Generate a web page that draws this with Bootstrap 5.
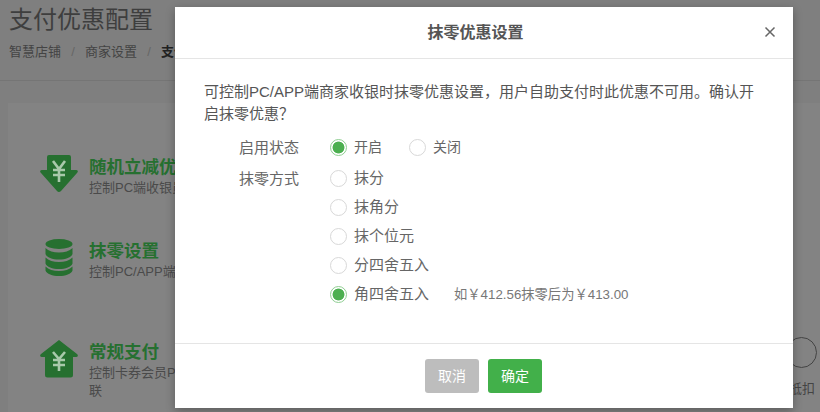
<!DOCTYPE html>
<html lang="zh">
<head>
<meta charset="utf-8">
<title>支付优惠配置</title>
<link href="https://cdn.jsdelivr.net/npm/bootstrap@5.3.0/dist/css/bootstrap.min.css" rel="stylesheet">
<style>
html,body{height:412px;overflow:hidden}
body{background:#7f7f7f;font-family:"Liberation Sans","Noto Sans CJK SC",sans-serif;color:#444;position:relative;width:820px}
.page-top{height:81px;padding:4px 9px 0;border-bottom:1px solid #757575}
.page-title{font-size:24px;line-height:32px;font-weight:400;color:#3e3e3e;margin:0}
.crumbs{font-size:13px;line-height:18px;margin:7px 0 0;color:#444}
.crumbs b{color:#222;white-space:nowrap}
.crumbs i{font-style:normal;color:#666;width:24px;text-align:center}
.page-body{height:331px;padding:22px 0 0 8px}
.panel-box{background:#838383;height:309px;padding:51px 0 0 31px;position:relative}
.feature{height:84px;gap:10px}
.feature-tall{height:101px}
.feature-ico{width:40px;height:38px;flex:none;margin-top:1px}
.feature-txt{margin-top:2px}
.feature-name{font-size:17.500px;line-height:22px;font-weight:700;color:#267030;white-space:nowrap}
.feature-desc{font-size:13px;line-height:18px;color:#4a4a4a;width:100px;margin-top:1px}
.feature-ico .solid{fill:#267030}
.feature-ico .yen{stroke:#a9c9ab;stroke-width:2.600;fill:none}
.toggle-ring{position:absolute;left:778px;top:234px;width:31px;height:31px;border:1px solid #444;border-radius:50%}
.deduct{position:absolute;left:781px;top:277px;font-size:13px;line-height:18px;color:#444;white-space:nowrap}
.dlg{position:absolute;left:175px;top:7px;width:618px;height:401px;background:#fff;border:0;border-radius:0;box-shadow:0 3px 9px rgba(0,0,0,.3)}
.dlg .modal-header{height:52px;padding:0 17px 0 0;border-bottom:1px solid #e5e5e5;position:relative;justify-content:center}
.dlg .modal-title{font-size:16px;font-weight:700;color:#555;line-height:53px}
.x-btn{position:absolute;right:17px;top:19px;width:12px;height:12px;padding:0;border:0;background:none;display:block}
.dlg .modal-body{padding:22px 29px 0;height:284px;flex:none}
.intro{font-size:15px;line-height:22px;color:#555;margin:0 0 8px}
.opt-grid{display:grid;grid-template-columns:126px 1fr;row-gap:2px}
.opt-label{font-size:15px;line-height:29px;color:#666;padding-left:35px}
.opt-col{display:flex;flex-direction:column}
.opt-row{height:29px;display:flex;align-items:center}
.pick{display:flex;align-items:center;font-size:15px;color:#666;margin:0;white-space:nowrap}
.pick-sm{font-size:14px}
.pick input{appearance:none;width:17px;height:17px;border:1px solid #d8d8d8;border-radius:50%;background:#fff;margin:0 7px 0 0;flex:none}
.pick input:checked{border-color:#8fce92;background:radial-gradient(circle,#4caf50 0 5.600px,#fff 6.300px)}
.pick-gap{margin-left:27px}
.pick-hint{font-size:13.300px;color:#777;margin-left:25px}
.dlg .modal-footer{height:65px;justify-content:center;gap:9px;border-top:1px solid #e5e5e5;flex-wrap:nowrap;align-items:flex-start;padding:15px 1px 0 0}
.dlg .modal-footer .btn{margin:0;width:54px;height:34px;padding:0;font-size:14px;border:0;border-radius:3px;color:#fff;font-weight:400}
.dlg .modal-footer .btn-nope{background:#bdbdbd}
.dlg .modal-footer .btn-yes{background:#42b04a}
</style>
</head>
<body>
<div class="page-top">
  <h1 class="page-title">支付优惠配置</h1>
  <div class="crumbs d-flex"><span>智慧店铺</span><i>/</i><span>商家设置</span><i>/</i><b>支付优惠配置</b></div>
</div>
<div class="page-body">
  <div class="panel-box">
    <div class="feature d-flex">
      <svg class="feature-ico" viewBox="0 0 40 38"><path class="solid" d="M10 0h20a2 2 0 0 1 2 2v13h5c2 0 2.500 1.500 1 3L22 36c-1.200 1.200-3 1.200-4 0L2 18c-1.500-1.500-1-3 1-3h5V2a2 2 0 0 1 2-2z"/><path class="yen" d="M14 6l6 8 6-8M14 15h12M14 20h12M20 14v13"/></svg>
      <div class="feature-txt"><div class="feature-name">随机立减优惠</div><div class="feature-desc">控制PC端收银员</div></div>
    </div>
    <div class="feature feature-tall d-flex">
      <svg class="feature-ico" viewBox="0 0 40 38"><g class="solid"><ellipse cx="20" cy="5" rx="13.500" ry="5"/><path d="M6.500 9c3 3 8 4.500 13.500 4.500S30.500 12 33.500 9v6c-1 3.500-7 5.500-13.500 5.500S7.500 18.500 6.500 15z"/><path d="M6.500 18.500c3 3 8 4.500 13.500 4.500s10.500-1.500 13.500-4.500v6c-1 3.500-7 5.500-13.500 5.500S7.500 28 6.500 24.500z"/><path d="M6.500 27.500c3 3 8 4.500 13.500 4.500s10.500-1.500 13.500-4.500v4c-1 3.500-7 5.500-13.500 5.500S7.500 35 6.500 31.500z"/></g></svg>
      <div class="feature-txt"><div class="feature-name">抹零设置</div><div class="feature-desc">控制PC/APP端商</div></div>
    </div>
    <div class="feature d-flex">
      <svg class="feature-ico" viewBox="0 0 40 38"><path class="solid" d="M20 0l18 14c1.500 1.500 1 3-1 3h-3v18a2.500 2.500 0 0 1-2.500 2.500h-23A2.500 2.500 0 0 1 6 35V17H3c-2 0-2.500-1.500-1-3z"/><path class="yen" d="M14 12l6 7 6-7M14 20h12M14 25h12M20 19v12"/></svg>
      <div class="feature-txt"><div class="feature-name">常规支付</div><div class="feature-desc">控制卡券会员PC联</div></div>
    </div>
    <div class="toggle-ring"></div>
    <div class="deduct">抵扣</div>
  </div>
</div>
<div class="modal-content dlg">
  <div class="modal-header">
    <h5 class="modal-title">抹零优惠设置</h5>
    <button class="x-btn" type="button" aria-label="关闭"><svg class="d-block" width="12" height="12" viewBox="0 0 12 12"><path d="M1.500 1.500l9 9M10.500 1.500l-9 9" stroke="#666" stroke-width="1.500"/></svg></button>
  </div>
  <div class="modal-body">
    <p class="intro">可控制PC/APP端商家收银时抹零优惠设置，用户自助支付时此优惠不可用。确认开启抹零优惠？</p>
    <div class="opt-grid">
      <div class="opt-label">启用状态</div>
      <div class="opt-row">
        <label class="pick pick-sm"><input type="radio" name="st" checked>开启</label>
        <label class="pick pick-sm pick-gap"><input type="radio" name="st">关闭</label>
      </div>
      <div class="opt-label">抹零方式</div>
      <div class="opt-col">
        <div class="opt-row"><label class="pick"><input type="radio" name="way">抹分</label></div>
        <div class="opt-row"><label class="pick"><input type="radio" name="way">抹角分</label></div>
        <div class="opt-row"><label class="pick"><input type="radio" name="way">抹个位元</label></div>
        <div class="opt-row"><label class="pick"><input type="radio" name="way">分四舍五入</label></div>
        <div class="opt-row"><label class="pick"><input type="radio" name="way" checked>角四舍五入</label><span class="pick-hint">如￥412.56抹零后为￥413.00</span></div>
      </div>
    </div>
  </div>
  <div class="modal-footer">
    <button class="btn btn-nope" type="button">取消</button>
    <button class="btn btn-yes" type="button">确定</button>
  </div>
</div>
<script src="https://cdn.jsdelivr.net/npm/bootstrap@5.3.0/dist/js/bootstrap.bundle.min.js"></script>
</body>
</html>
